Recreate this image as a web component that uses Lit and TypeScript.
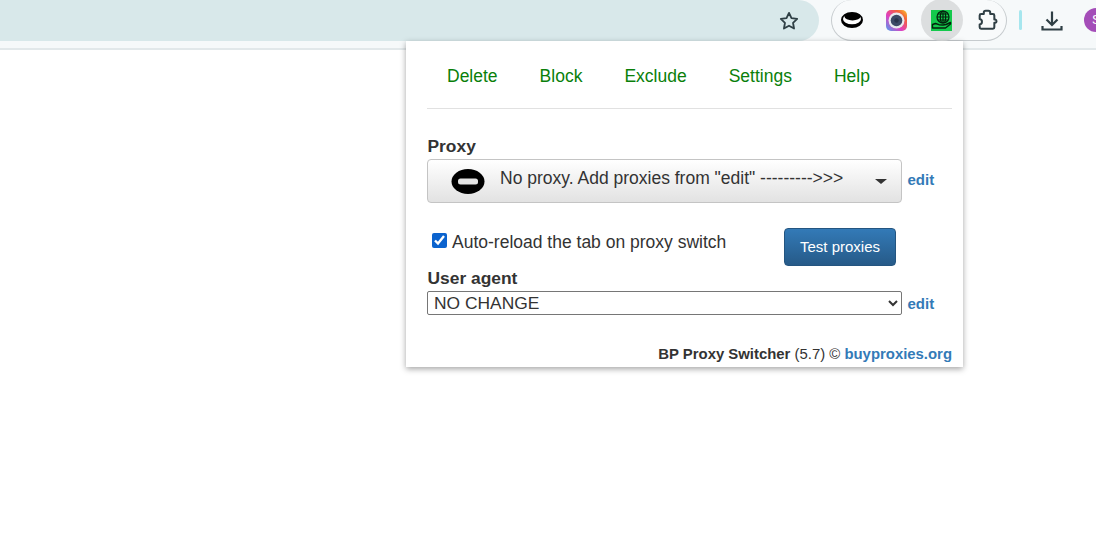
import { LitElement, html, css } from "lit";
import { customElement } from "lit/decorators.js";

@customElement("app-root")
export class AppRoot extends LitElement {
  static styles = css`
    :host { display: block; position: relative; width: 1096px; height: 547px; overflow: hidden; background: #fff; font-family: "Liberation Sans", Arial, sans-serif; color: #333; }
    .toolbar { height: 50px; box-sizing: border-box; display: flex; background: #f6f9fa; border-bottom: 2px solid #e2e8ea; }
    .omni { width: 819px; height: 41px; background: #d8e8ea; border-radius: 0 21px 21px 0; display: flex; justify-content: flex-end; align-items: center; padding-right: 19px; box-sizing: border-box; flex: none; }
    .pill { margin-left: 12px; width: 176px; height: 41px; box-sizing: border-box; border: 1px solid #c6cbce; border-top: 0; border-radius: 21px; background: #f8fafb; display: flex; align-items: center; flex: none; }
    .slots { display: flex; align-items: center; margin-left: -3px; }
    .slot { width: 45px; height: 41px; display: flex; align-items: center; justify-content: center; flex: none; }
    .slot.on { background: #dcdedf; border-radius: 50%; width: 42px; height: 42px; margin: 0 1.5px; }
    .sep { width: 3px; height: 20px; margin: 10px 0 0 12px; background: #a6e6ee; border-radius: 2px; flex: none; }
    .dl { margin-left: 18px; height: 41px; display: flex; align-items: center; flex: none; }
    .avatar { margin-left: 20px; width: 24px; height: 24px; margin-top: 8px; border-radius: 50%; background: #a44db8; color: #fff; font-size: 13px; line-height: 24px; padding-left: 8px; box-sizing: border-box; flex: none; }
    .popup { position: absolute; left: 406px; top: 41px; width: 557px; height: 326px; box-sizing: border-box; background: #fff; box-shadow: 0 2px 6px rgba(0,0,0,.36); padding: 0 11px 0 21px; display: flex; flex-direction: column; }
    nav { display: flex; gap: 42px; padding: 24px 0 0 20px; height: 68px; box-sizing: border-box; border-bottom: 1px solid #e1e1e1; font-size: 17.5px; line-height: 22px; flex: none; }
    nav a { color: #0a7f0a; }
    .label { font-weight: 700; font-size: 17.4px; line-height: 20px; color: #333; margin-left: .5px; }
    .l1 { margin-top: 27px; }
    .row { display: flex; align-items: center; gap: 5px; }
    .picker { width: 475px; height: 44px; box-sizing: border-box; border: 1px solid #c4c4c4; border-radius: 4px; background: linear-gradient(#fff, #e2e2e2); display: flex; align-items: center; margin-top: 3px; padding-left: 23px; font-size: 17.5px; flex: none; color: #333; }
    .picker .txt { margin-left: 15px; flex: 1; white-space: nowrap; position: relative; top: -3px; }
    .caret { width: 0; height: 0; border-left: 6px solid transparent; border-right: 6px solid transparent; border-top: 5px solid #333; margin-right: 14px; }
    .edit { color: #337ab7; font-weight: 700; font-size: 15px; margin-left: 0.5px; }
    .opts { display: flex; align-items: center; margin-top: 25px; height: 38px; }
    .opts input { margin: 0 5px 0 5px; width: 15px; height: 15px; accent-color: #0b63ce; flex: none; position: relative; top: -7px; }
    .opts label { font-size: 17.5px; width: 332px; white-space: nowrap; position: relative; top: -5px; }
    .btn { width: 112px; height: 38px; box-sizing: border-box; border: 1px solid #245580; border-radius: 4px; background: linear-gradient(#337ab7, #265a88); color: #fff; font: 15px "Liberation Sans", Arial, sans-serif; padding: 0 0 2px; }
    .l2 { margin-top: 2px; }
    select { width: 475px; height: 24px; box-sizing: border-box; border: 1px solid #767676; border-radius: 2px; background: #fff; font: 17.4px "Liberation Sans", Arial, sans-serif; color: #333; padding: 0 0 0 2px; flex: none; margin-top: 3px; }
    .uarow .edit { margin-top: 3px; }
    footer { margin-top: auto; margin-bottom: 4px; text-align: right; font-size: 14.9px; line-height: 18px; color: #333; white-space: nowrap; }
    footer a { color: #337ab7; font-weight: 700; }
  `;

  render() {
    return html`
      <div class="toolbar">
        <div class="omni">
          <svg width="22" height="22" viewBox="0 0 24 24" fill="none" stroke="#2f3f45" stroke-width="2" stroke-linejoin="round"><path d="M12 3.200l2.700 5.700 6.200.8-4.500 4.300 1.100 6.200L12 17.200l-5.500 3 1.100-6.200L3.100 9.700l6.200-.8z"/></svg>
        </div>
        <div class="pill">
          <div class="slots">
            <div class="slot">
              <svg width="22" height="16" viewBox="0 0 22 16"><ellipse cx="11" cy="8" rx="11" ry="8" fill="#000"/><ellipse cx="11" cy="7" rx="9" ry="5.200" fill="#fff"/><ellipse cx="11.500" cy="4.600" rx="8" ry="3.900" fill="#000"/></svg>
            </div>
            <div class="slot">
              <svg width="21" height="21" viewBox="0 0 21 21"><defs><linearGradient id="rb" x1="0" y1="1" x2="1" y2="0"><stop offset="0" stop-color="#4aa3f0"/><stop offset=".4" stop-color="#e040c0"/><stop offset=".75" stop-color="#f4603a"/><stop offset="1" stop-color="#f7c92c"/></linearGradient></defs><rect width="21" height="21" rx="5" fill="url(#rb)"/><circle cx="10.500" cy="10.500" r="8" fill="#e8eaee"/><circle cx="10.500" cy="10.500" r="5.800" fill="#3c4a66"/><circle cx="10.500" cy="10.500" r="2.200" fill="#29344c"/></svg>
            </div>
            <div class="slot on">
              <svg width="21" height="21" viewBox="0 0 21 21"><rect width="21" height="21" fill="#14c94c"/><g fill="none" stroke="#04200d" stroke-width="1.200"><circle cx="12" cy="7" r="6"/><ellipse cx="12" cy="7" rx="2.700" ry="6"/><path d="M6 7h12M7 4h10M7 10h10M12 1v12"/></g><path d="M1.500 14.500l3-1 3.500 1.200 4 .3 3-.5 4.500-2v1.500l-5 4H5L1.500 18z" fill="#14c94c" stroke="#04200d" stroke-width="1.400" stroke-linejoin="round"/></svg>
            </div>
            <div class="slot">
              <svg width="22" height="22" viewBox="0 0 24 24" fill="none" stroke="#2f3f45" stroke-width="2.200" stroke-linejoin="round"><path d="M4 7a1.500 1.500 0 0 1 1.500-1.500H8.500V4a2 2 0 0 1 2-2h3a2 2 0 0 1 2 2v1.500h3A1.500 1.500 0 0 1 20 7v4.500h1a1.800 1.800 0 0 1 0 3.500h-1v5a1.500 1.500 0 0 1-1.500 1.500H5.500A1.500 1.500 0 0 1 4 20v-3a3 3 0 0 0 2.500-3A3 3 0 0 0 4 11z"/></svg>
            </div>
          </div>
        </div>
        <div class="sep"></div>
        <div class="dl">
          <svg width="24" height="24" viewBox="0 0 24 24" fill="none" stroke="#2f3f45" stroke-width="2.200"><path d="M12 2.500v13M6.500 10.500l5.500 5.500 5.500-5.500M2.500 17v3.500h19V17"/></svg>
        </div>
        <div class="avatar">S</div>
      </div>

      <div class="popup">
        <nav>
          <a>Delete</a><a>Block</a><a>Exclude</a><a>Settings</a><a>Help</a>
        </nav>
        <div class="label l1">Proxy</div>
        <div class="row">
          <div class="picker">
            <svg width="34" height="25" viewBox="0 0 34 25"><ellipse cx="17" cy="12.500" rx="16.500" ry="12.500" fill="#000"/><rect x="7" y="9.500" width="20" height="6" rx="2.500" fill="#e4e4e4"/></svg>
            <span class="txt">No proxy. Add proxies from "edit" ---------&gt;&gt;&gt;</span>
            <span class="caret"></span>
          </div>
          <a class="edit">edit</a>
        </div>
        <div class="opts">
          <input type="checkbox" checked />
          <label>Auto-reload the tab on proxy switch</label>
          <button class="btn">Test proxies</button>
        </div>
        <div class="label l2">User agent</div>
        <div class="row uarow">
          <select><option>NO CHANGE</option></select>
          <a class="edit">edit</a>
        </div>
        <footer><b>BP Proxy Switcher</b> (5.7) © <a>buyproxies.org</a></footer>
      </div>
    `;
  }
}
